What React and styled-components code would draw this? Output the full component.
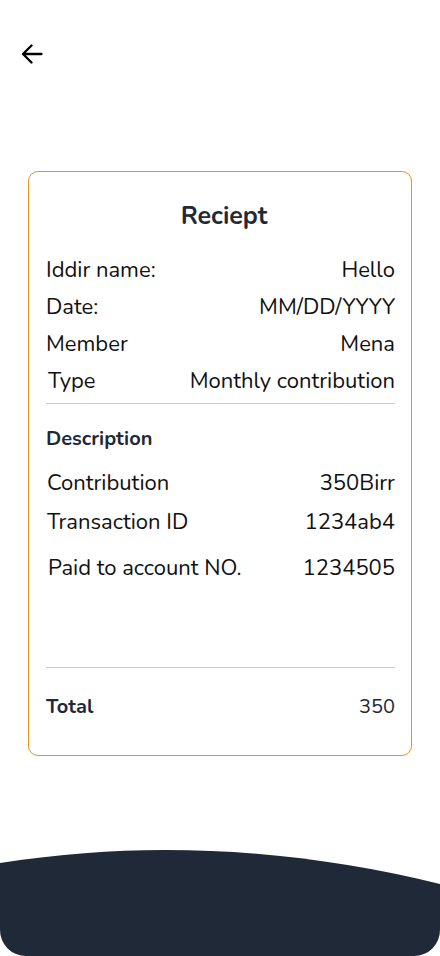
import styled, { createGlobalStyle } from 'styled-components'

const GlobalStyle = createGlobalStyle`
  body {
    margin: 0;
    background: #ffffff;
    font-family: Nunito, "Noto Sans", sans-serif;
  }
`

const StyledPage = styled.div`
  min-height: 956px;
  display: flex;
  flex-direction: column;
`
const StyledHeader = styled.div`
  padding: 44px 0 0 21px;
  height: 20px;
`
const StyledBackButton = styled.button`
  border: none;
  background: none;
  padding: 0;
  display: block;
  cursor: pointer;
`
const StyledCard = styled.div`
  margin: 107px 28px 0;
  border: 1px solid #e9931e;
  border-radius: 10px;
  padding: 29px 16px 36px 17px;
`
const StyledTitle = styled.h2`
  margin: 0;
  padding-left: 7px;
  text-align: center;
  font-size: 25px;
  line-height: 30px;
  font-weight: 700;
  color: #1f2937;
`
const StyledList = styled.div`
  margin-top: ${(props) => props.top}px;
`
const StyledRow = styled.div`
  display: flex;
  justify-content: space-between;
  align-items: center;
  height: 37px;
  margin-top: ${(props) => props.gap || 0}px;
  padding-left: ${(props) => props.indent || 0}px;
  font-size: 22px;
  color: #111111;
`
const StyledDivider = styled.hr`
  margin: ${(props) => props.top}px 0 0;
  border: none;
  height: 1px;
  background: #cccccc;
`
const StyledSection = styled.div`
  margin-top: ${(props) => props.top}px;
  line-height: 24px;
  font-size: 20px;
  font-weight: 700;
  color: #1f2937;
  display: flex;
  justify-content: space-between;
`
const StyledAmount = styled.span`
  font-weight: 400;
`
const StyledFooter = styled.div`
  margin-top: auto;
  height: 106px;
  border-radius: 0 0 26px 26px;
  overflow: hidden;
  svg {
    display: block;
  }
`

const details = [
  ['Iddir name:', 'Hello', 0],
  ['Date:', 'MM/DD/YYYY', 0],
  ['Member', 'Mena', 0],
  ['Type', 'Monthly contribution', 2],
]

const description = [
  ['Contribution', '350Birr', 0, 1],
  ['Transaction ID', '1234ab4', 2, 1],
  ['Paid to account NO.', '1234505', 9, 2],
]

const App = () => {
  return (
    <StyledPage>
      <GlobalStyle />
      <StyledHeader>
        <StyledBackButton aria-label='Back'>
          <svg width='22' height='20' viewBox='0 0 22 20' fill='none' stroke='#000' strokeWidth='2.3' strokeLinecap='round' strokeLinejoin='round'>
            <path d='M20.5 10H2M10.5 1.5L2 10l8.5 8.5' />
          </svg>
        </StyledBackButton>
      </StyledHeader>
      <StyledCard>
        <StyledTitle>Reciept</StyledTitle>
        <StyledList top={20}>
          {details.map(([label, value, indent]) => (
            <StyledRow key={label} indent={indent}>
              <span>{label}</span>
              <span>{value}</span>
            </StyledRow>
          ))}
        </StyledList>
        <StyledDivider top={4} />
        <StyledSection top={23}>Description</StyledSection>
        <StyledList top={13}>
          {description.map(([label, value, gap, indent]) => (
            <StyledRow key={label} gap={gap} indent={indent}>
              <span>{label}</span>
              <span>{value}</span>
            </StyledRow>
          ))}
        </StyledList>
        <StyledDivider top={81} />
        <StyledSection top={27}>
          <span>Total</span>
          <StyledAmount>350</StyledAmount>
        </StyledSection>
      </StyledCard>
      <StyledFooter>
        <svg width='440' height='106' viewBox='0 0 440 106'>
          <path d='M0 13C60 4 110 0 165 0C260 0 350 12 440 34V106H0Z' fill='#1f2937' />
        </svg>
      </StyledFooter>
    </StyledPage>
  )
}

export default App
